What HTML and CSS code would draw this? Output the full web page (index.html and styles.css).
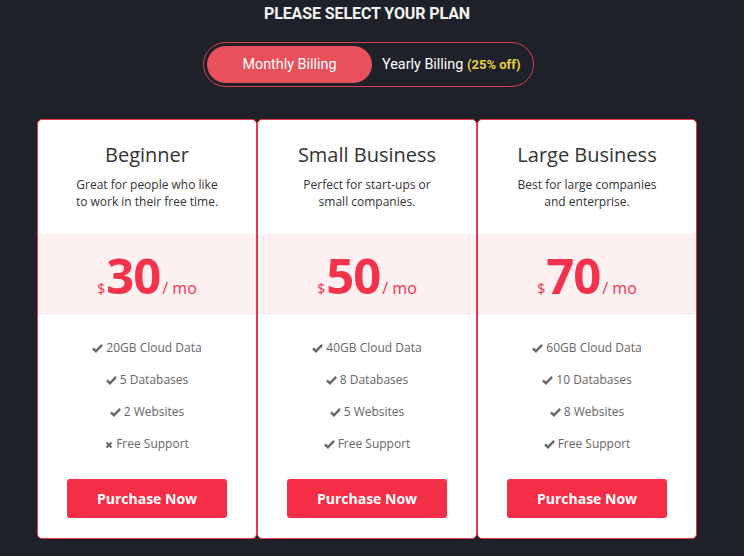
FILE: index.html
```html
<!DOCTYPE html>
<html lang="en">
<head>
  <meta charset="UTF-8">
  <title>Pricing</title>
  <link rel="stylesheet" href="styles.css">
</head>
<body>
  <header>
    <h1>PLEASE SELECT YOUR PLAN</h1>
  </header>

  <div class="toggle">
    <button class="toggle-btn active">Monthly Billing</button>
    <button class="toggle-btn">Yearly Billing <span class="off">(25% off)</span></button>
  </div>

  <div class="plans">
    <div class="plan">
      <div class="plan-head">
        <h2>Beginner</h2>
        <p>Great for people who like<br>to work in their free time.</p>
      </div>
      <div class="price"><span class="cur">$</span><span class="amount">30</span><span class="per">/ mo</span></div>
      <ul class="features">
        <li><svg class="ico" viewBox="0 0 12 10"><path d="M1 5.4 L4.3 8.5 L11 1.6" /></svg>20GB Cloud Data</li>
        <li><svg class="ico" viewBox="0 0 12 10"><path d="M1 5.4 L4.3 8.5 L11 1.6" /></svg>5 Databases</li>
        <li><svg class="ico" viewBox="0 0 12 10"><path d="M1 5.4 L4.3 8.5 L11 1.6" /></svg>2 Websites</li>
        <li><svg class="ico x" viewBox="0 0 10 10"><path d="M2 2 L8 8 M8 2 L2 8" /></svg>Free Support</li>
      </ul>
      <button class="buy">Purchase Now</button>
    </div>

    <div class="plan">
      <div class="plan-head">
        <h2>Small Business</h2>
        <p>Perfect for start-ups or<br>small companies.</p>
      </div>
      <div class="price"><span class="cur">$</span><span class="amount">50</span><span class="per">/ mo</span></div>
      <ul class="features">
        <li><svg class="ico" viewBox="0 0 12 10"><path d="M1 5.4 L4.3 8.5 L11 1.6" /></svg>40GB Cloud Data</li>
        <li><svg class="ico" viewBox="0 0 12 10"><path d="M1 5.4 L4.3 8.5 L11 1.6" /></svg>8 Databases</li>
        <li><svg class="ico" viewBox="0 0 12 10"><path d="M1 5.4 L4.3 8.5 L11 1.6" /></svg>5 Websites</li>
        <li><svg class="ico" viewBox="0 0 12 10"><path d="M1 5.4 L4.3 8.5 L11 1.6" /></svg>Free Support</li>
      </ul>
      <button class="buy">Purchase Now</button>
    </div>

    <div class="plan">
      <div class="plan-head">
        <h2>Large Business</h2>
        <p>Best for large companies<br>and enterprise.</p>
      </div>
      <div class="price"><span class="cur">$ </span><span class="amount">70</span><span class="per">/ mo</span></div>
      <ul class="features">
        <li><svg class="ico" viewBox="0 0 12 10"><path d="M1 5.4 L4.3 8.5 L11 1.6" /></svg>60GB Cloud Data</li>
        <li><svg class="ico" viewBox="0 0 12 10"><path d="M1 5.4 L4.3 8.5 L11 1.6" /></svg>10 Databases</li>
        <li><svg class="ico" viewBox="0 0 12 10"><path d="M1 5.4 L4.3 8.5 L11 1.6" /></svg>8 Websites</li>
        <li><svg class="ico" viewBox="0 0 12 10"><path d="M1 5.4 L4.3 8.5 L11 1.6" /></svg>Free Support</li>
      </ul>
      <button class="buy">Purchase Now</button>
    </div>
  </div>
</body>
</html>
```

FILE: styles.css
```css
body {
  font-family: "Open Sans", Arial, sans-serif;
  background-color: #1e2129;
  margin: 0;
  padding: 0;
}
header {
  text-align: center;
  padding: 4px 10px 0 0;
}
header h1 {
  margin: 0;
  font-family: Roboto, Arial, sans-serif;
  font-size: 16px;
  line-height: 20px;
  font-weight: 700;
  letter-spacing: -0.1px;
  color: #f4f4f4;
}
.toggle {
  display: flex;
  width: fit-content;
  margin: 18px 0 0 203px;
  padding: 3px;
  border: 1px solid #d8404f;
  border-radius: 23px;
}
.toggle-btn {
  font-family: Roboto, Arial, sans-serif;
  font-size: 14.4px;
  color: #fff;
  background: none;
  border: none;
  height: 37px;
  padding: 0 9px 0 10px;
  border-radius: 19px;
  cursor: pointer;
}
.toggle-btn.active {
  width: 165px;
  padding: 0;
  background-color: #e8505c;
}
.off {
  font-size: 13px;
  color: #e6d43b;
  font-weight: 700;
}
.plans {
  display: flex;
  margin: 32px 0 0 37px;
}
.plan {
  width: 220px;
  box-sizing: border-box;
  background-color: #fff;
  border: 1px solid #e8374d;
  border-radius: 5px;
  padding: 23px 0 20px;
  text-align: center;
}
.plan-head h2 {
  margin: 0;
  font-size: 20px;
  line-height: 24px;
  font-weight: 400;
  color: #333;
}
.plan-head p {
  margin: 9px 0 0;
  font-size: 12px;
  line-height: 17px;
  color: #333;
}
.price {
  margin-top: 24px;
  height: 81px;
  background-color: #fdf0f1;
  color: #f2334b;
  display: flex;
  justify-content: center;
  align-items: baseline;
  padding-top: 11px;
  box-sizing: border-box;
}
.cur {
  font-size: 14px;
  margin-right: 1px;
}
.amount {
  font-size: 49px;
  line-height: 60px;
  font-weight: 700;
  letter-spacing: -1px;
}
.per {
  font-size: 16px;
  margin-left: 2px;
}
.features {
  list-style: none;
  margin: 0;
  padding: 17px 0 0;
}
.features li {
  font-size: 12px;
  line-height: 32px;
  color: #666;
}
.ico {
  width: 11px;
  height: 10px;
  margin-right: 3px;
  vertical-align: -1px;
  fill: none;
  stroke: #666;
  stroke-width: 2.6;
}
.ico.x {
  width: 8px;
  height: 8px;
  stroke-width: 2.6;
}
.buy {
  margin-top: 19px;
  width: 160px;
  height: 39px;
  font-family: "Open Sans", Arial, sans-serif;
  font-size: 14px;
  font-weight: 700;
  color: #fff;
  background-color: #f42e47;
  border: none;
  border-radius: 3px;
  cursor: pointer;
}
```
